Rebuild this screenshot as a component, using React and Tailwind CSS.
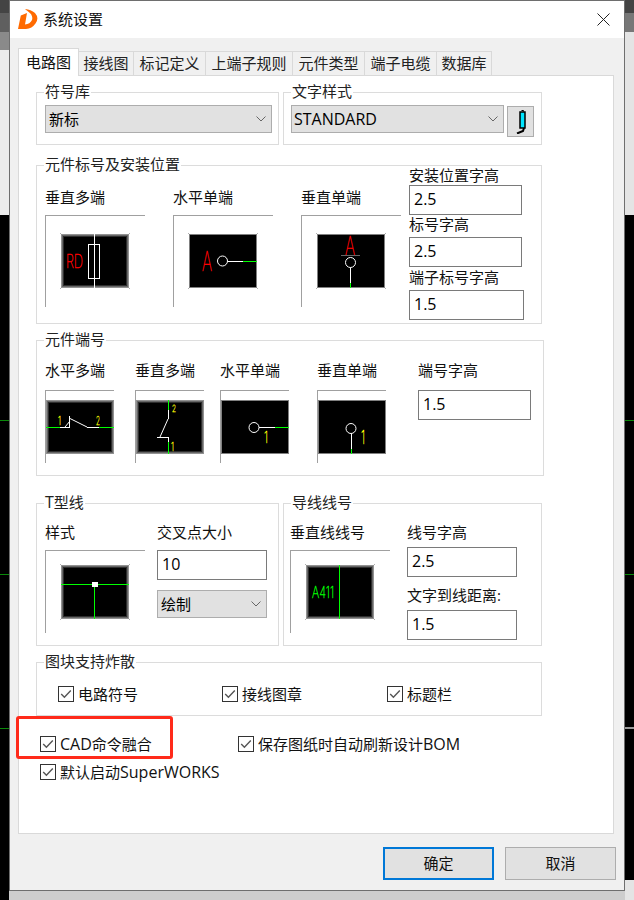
import React from "react";

const Chevron = () => (
  <svg width="10" height="6" viewBox="0 0 10 6" className="shrink-0"><polyline points="0.5,0.5 5,5 9.5,0.5" fill="none" stroke="#666" strokeWidth="1" /></svg>
);

const Select = ({ value, className }) => (
  <div className={"flex items-center justify-between bg-[#e1e1e1] border border-[#adadad] pl-[3px] pr-[5px] text-[15px] leading-none text-black " + className}>
    {value}
    <Chevron />
  </div>
);

const Field = ({ value, className = "" }) => (
  <div className={"flex items-center border border-[#7a7a7a] bg-white pl-[4px] pb-[2px] h-[30px] text-[16px] text-black " + className}>{value}</div>
);

const Label = ({ children, className = "" }) => (
  <div className={"text-[15px] leading-[18px] h-[20px] whitespace-nowrap text-[#111] " + className}>{children}</div>
);

const Group = ({ title, className = "", children }) => (
  <div className={"relative border border-[#dcdcdc] bg-white " + className}>
    <div className="absolute left-[7px] top-[-11px] bg-white px-[1px] text-[15px] leading-[18px] text-[#222] whitespace-nowrap">{title}</div>
    {children}
  </div>
);

const Handles = () => (
  <g fill="#b0b0b0">
    <rect x="-1" y="-1" width="1" height="1" />
    <rect x="68" y="-1" width="1" height="1" />
    <rect x="-1" y="54" width="1" height="1" />
    <rect x="68" y="54" width="1" height="1" />
  </g>
);

const Preview = ({ bevel, handles = true, children }) => (
  <svg width="68" height="54" viewBox="0 0 68 54" className="block overflow-visible">
    <rect x="0" y="0" width="68" height="54" fill="#000" />
    {bevel ? (
      <g fill="none">
        <rect x="0.5" y="0.5" width="67" height="53" stroke="#929292" />
        <rect x="1.5" y="1.5" width="65" height="51" stroke="#666" />
        <rect x="2.5" y="2.5" width="63" height="49" stroke="#2e2e2e" />
      </g>
    ) : (
      <rect x="0.5" y="0.5" width="67" height="53" fill="none" stroke="#808080" />
    )}
    {children}
    {handles && <Handles />}
  </svg>
);

const Frame = ({ className = "", pad = "", children }) => (
  <div className={"border-t border-l border-[#a0a0a0] bg-white " + pad + " " + className}>{children}</div>
);

const Check = ({ label, className = "" }) => (
  <div className={"flex items-center h-[16px] " + className}>
    <div className="w-[16px] h-[16px] border border-[#333] bg-white flex items-center justify-center shrink-0">
      <svg width="12" height="10" viewBox="0 0 12 10"><polyline points="1.2,5 4.4,8.2 10.8,1.4" fill="none" stroke="#555" strokeWidth="1.4" /></svg>
    </div>
    <span className="ml-[4px] text-[15px] leading-[16px] text-[#111] whitespace-nowrap">{label}</span>
  </div>
);

const Lat = ({ children, className = "" }) => <span className={"text-[16px] " + className}>{children}</span>;

const CadText = ({ x, y, w, size, fill, children }) => (
  <text x={x} y={y} fontSize={size} fontWeight="100" fill={fill} stroke={fill} strokeWidth="0.55" textLength={w} lengthAdjust="spacingAndGlyphs" fontFamily="Inter, Liberation Sans, sans-serif">{children}</text>
);

const W = "#fff", G = "#0f0", R = "#f00", Y = "#ff0";
const L = ({ x1, y1, x2, y2, c = W }) => <line x1={x1} y1={y1} x2={x2} y2={y2} stroke={c} strokeWidth="1" />;

const Tab = ({ children, className = "" }) => (
  <div className={"flex items-center justify-center h-[24px] border-t border-r border-[#d9d9d9] text-[15px] text-[#222] whitespace-nowrap " + className}>{children}</div>
);

export default function App() {
  return (
    <div className="relative flex w-[634px] h-[900px] overflow-hidden bg-[#cdcdcd] font-['Open_Sans','Noto_Sans_CJK_SC',sans-serif]">
      <div className="flex flex-col w-[9px] h-[900px] shrink-0">
        <div className="h-[13px] bg-[#444]" />
        <div className="h-[19px] bg-[#5f5f5f]" />
        <div className="h-[18px] bg-[#8a8a8a]" />
        <div className="h-[165px] bg-[#ececec]" />
        <div className="h-[205px] bg-black" />
        <div className="h-[1px] bg-[#0a8a0a]" />
        <div className="h-[153px] bg-black" />
        <div className="h-[1px] bg-[#0a8a0a]" />
        <div className="h-[153px] bg-black" />
        <div className="h-[1px] bg-[#0a8a0a]" />
        <div className="flex-1 bg-black" />
      </div>

      <div className="flex flex-col w-[616px] h-[891px] shrink-0 border-t border-l border-r border-b border-[#6e6e6e] bg-[#f0f0f0]">
        <div className="flex items-center h-[37px] bg-white shrink-0 pl-[8px] pr-[14px]">
          <svg width="20" height="21" viewBox="0 0 20 21" className="shrink-0">
            <path d="M0 20 L2.8 6.6 L9 4 L7 15.6 Q12 15 14 11 Q15.5 6 9.5 2 Q8 1 7 0 Q13 .5 17 4 Q21.5 9 17.5 14.5 Q14 19.5 8 20 Z" fill="#ff6a00" />
          </svg>
          <span className="ml-[5px] text-[15px] text-[#111]">系统设置</span>
          <svg width="13" height="13" viewBox="0 0 13 13" className="ml-auto shrink-0"><path d="M0.5 0.5 L12.5 12.5 M12.5 0.5 L0.5 12.5" stroke="#222" strokeWidth="1" fill="none" /></svg>
        </div>

        <div className="flex flex-col flex-1 pl-[8px] pt-[10px]">
          <div className="flex items-end h-[27px] relative z-10">
            <div className="flex items-center justify-center w-[61px] h-[28px] -mb-[1px] bg-white border-t border-l border-r border-[#d9d9d9] text-[15px] text-[#111]">电路图</div>
            <Tab className="w-[55px]">接线图</Tab>
            <Tab className="w-[72px]">标记定义</Tab>
            <Tab className="w-[87px]">上端子规则</Tab>
            <Tab className="w-[72px]">元件类型</Tab>
            <Tab className="w-[72px]">端子电缆</Tab>
            <Tab className="w-[55px]">数据库</Tab>
          </div>

          <div className="flex flex-col w-[596px] h-[759px] bg-white border border-[#d9d9d9] pl-[17px] pt-[16px]">
            <div className="flex gap-[4px]">
              <Group title="符号库" className="w-[243px] h-[53px] pl-[8px] pt-[12px]">
                <Select value={<span>新标</span>} className="w-[227px] h-[28px]" />
              </Group>
              <Group title="文字样式" className="flex items-start w-[259px] h-[53px] pl-[7px] pt-[12px]">
                <Select value={<Lat className="-ml-[1px]">STANDARD</Lat>} className="w-[213px] h-[28px]" />
                <div className="ml-[3px] mt-[1px] flex items-center justify-center w-[27px] h-[31px] bg-[#e1e1e1] border border-[#adadad]">
                  <svg width="12" height="24" viewBox="0 0 12 24">
                    <path d="M6.5 0.5 H8.5 V1.5" fill="none" stroke="#000" />
                    <rect x="5" y="2" width="5" height="16" fill="#00e5ff" stroke="#000" strokeWidth="1.5" />
                    <path d="M9 18 L8 21 L2 23.5" fill="none" stroke="#000" strokeWidth="2" />
                  </svg>
                </div>
              </Group>
            </div>

            <Group title="元件标号及安装位置" className="flex items-start mt-[20px] w-[506px] h-[159px] pl-[8px] pt-[22px]">
              <div className="w-[100px]">
                <Label>垂直多端</Label>
                <Frame className="mt-[7px] w-[100px] h-[92px]" pad="pl-[15px] pt-[18px]">
                  <Preview bevel>
                    <CadText x="5" y="34" w="17" size="18" fill={R}>RD</CadText>
                    <L x1="33.5" y1="0" x2="33.5" y2="54" />
                    <rect x="27.5" y="10.5" width="11" height="34" fill="none" stroke={W} />
                  </Preview>
                </Frame>
              </div>
              <div className="w-[100px] ml-[28px]">
                <Label>水平单端</Label>
                <Frame className="mt-[7px] w-[100px] h-[92px]" pad="pl-[15px] pt-[18px]">
                  <Preview>
                    <CadText x="13" y="37" w="10" size="27" fill={R}>A</CadText>
                    <circle cx="33.5" cy="27" r="5" fill="none" stroke={W} />
                    <L x1="38.5" y1="27.5" x2="54" y2="27.5" />
                    <L x1="54" y1="27.5" x2="68" y2="27.5" c={G} />
                  </Preview>
                </Frame>
              </div>
              <div className="w-[100px] ml-[28px]">
                <Label>垂直单端</Label>
                <Frame className="mt-[7px] w-[100px] h-[92px]" pad="pl-[15px] pt-[18px]">
                  <Preview>
                    <CadText x="28" y="21" w="10" size="26" fill={R}>A</CadText>
                    <L x1="24" y1="21.5" x2="43" y2="21.5" c="#666" />
                    <circle cx="33.5" cy="28.5" r="5" fill="none" stroke={W} />
                    <L x1="33.5" y1="33.5" x2="33.5" y2="49" />
                    <L x1="33.5" y1="49" x2="33.5" y2="54" c={G} />
                  </Preview>
                </Frame>
              </div>
              <div className="ml-[8px] -mt-[23px] flex flex-col items-start">
                <Label className="pt-[1px]">安装位置字高</Label>
                <Field value="2.5" className="w-[113px]" />
                <Label className="h-[22px]">标号字高</Label>
                <Field value="2.5" className="w-[113px]" />
                <Label className="h-[23px] pt-[1px]">端子标号字高</Label>
                <Field value="1.5" className="w-[115px]" />
              </div>
            </Group>

            <Group title="元件端号" className="flex items-start mt-[16px] w-[508px] h-[136px] pl-[8px] pt-[20px]">
              <div className="w-[69px]">
                <Label>水平多端</Label>
                <Frame className="mt-[9px] w-[69px] h-[73px]" pad="pt-[9px]">
                  <Preview bevel handles={false}>
                    <L x1="0" y1="27.5" x2="14" y2="27.5" c={G} />
                    <L x1="14" y1="27.5" x2="24" y2="27.5" />
                    <L x1="23.5" y1="16" x2="23.5" y2="27.5" />
                    <L x1="19" y1="27" x2="24" y2="21" />
                    <L x1="23" y1="18" x2="41" y2="27" />
                    <L x1="41" y1="27.5" x2="53" y2="27.5" />
                    <L x1="53" y1="27.5" x2="68" y2="27.5" c={G} />
                    <CadText x="12" y="25" w="3" size="12" fill={Y}>1</CadText>
                    <CadText x="50" y="25" w="4" size="12" fill={Y}>2</CadText>
                  </Preview>
                </Frame>
              </div>
              <div className="w-[69px] ml-[21px]">
                <Label>垂直多端</Label>
                <Frame className="mt-[9px] w-[69px] h-[73px]" pad="pt-[9px]">
                  <Preview bevel handles={false}>
                    <L x1="32.5" y1="0" x2="32.5" y2="10" c={G} />
                    <L x1="32.5" y1="10" x2="32.5" y2="19" />
                    <L x1="32" y1="19" x2="24" y2="37" />
                    <L x1="21" y1="37.5" x2="32" y2="37.5" />
                    <L x1="32.5" y1="37" x2="32.5" y2="42" />
                    <L x1="32.5" y1="42" x2="32.5" y2="54" c={G} />
                    <CadText x="36" y="12" w="4" size="10" fill={Y}>2</CadText>
                    <CadText x="35" y="51" w="3" size="11" fill={Y}>1</CadText>
                  </Preview>
                </Frame>
              </div>
              <div className="w-[69px] ml-[16px]">
                <Label>水平单端</Label>
                <Frame className="mt-[9px] w-[69px] h-[73px]" pad="pt-[9px]">
                  <Preview handles={false}>
                    <circle cx="33" cy="27.5" r="5" fill="none" stroke={W} />
                    <L x1="38" y1="27.5" x2="54" y2="27.5" />
                    <L x1="54" y1="27.5" x2="68" y2="27.5" c={G} />
                    <CadText x="43" y="43" w="4" size="16" fill={Y}>1</CadText>
                  </Preview>
                </Frame>
              </div>
              <div className="w-[69px] ml-[28px]">
                <Label>垂直单端</Label>
                <Frame className="mt-[9px] w-[69px] h-[73px]" pad="pt-[9px]">
                  <Preview handles={false}>
                    <circle cx="33" cy="28.5" r="5" fill="none" stroke={W} />
                    <L x1="33.5" y1="33.5" x2="33.5" y2="49" />
                    <L x1="33.5" y1="49" x2="33.5" y2="54" c={G} />
                    <CadText x="43" y="44" w="4" size="18" fill={Y}>1</CadText>
                  </Preview>
                </Frame>
              </div>
              <div className="ml-[32px]">
                <Label>端号字高</Label>
                <Field value="1.5" className="mt-[9px] w-[113px]" />
              </div>
            </Group>

            <div className="flex gap-[4px] mt-[27px]">
              <Group title={<Lat>T<span className="text-[15px]">型线</span></Lat>} className="flex items-start w-[243px] h-[143px] pl-[8px] pt-[19px]">
                <div className="w-[100px]">
                  <Label>样式</Label>
                  <Frame className="mt-[7px] w-[100px] h-[83px]" pad="pl-[15px] pt-[14px]">
                    <Preview bevel>
                      <L x1="0" y1="19.5" x2="68" y2="19.5" c={G} />
                      <L x1="33.5" y1="19" x2="33.5" y2="54" c={G} />
                      <rect x="31" y="17" width="6" height="5" fill={W} />
                    </Preview>
                  </Frame>
                </div>
                <div className="ml-[12px]">
                  <Label>交叉点大小</Label>
                  <Field value="10" className="mt-[7px] w-[110px]" />
                  <Select value={<span>绘制</span>} className="mt-[10px] w-[110px] h-[28px]" />
                </div>
              </Group>
              <Group title="导线线号" className="flex items-start w-[259px] h-[143px] pl-[6px] pt-[19px]">
                <div className="w-[100px]">
                  <Label>垂直线线号</Label>
                  <Frame className="mt-[7px] w-[100px] h-[83px]" pad="pl-[15px] pt-[14px]">
                    <Preview bevel>
                      <L x1="33.5" y1="0" x2="33.5" y2="54" c={G} />
                      <CadText x="6" y="33" w="22" size="16" fill={G}>A411</CadText>
                    </Preview>
                  </Frame>
                </div>
                <div className="ml-[17px]">
                  <Label>线号字高</Label>
                  <Field value="2.5" className="mt-[4px] w-[110px]" />
                  <Label className="mt-[9px]">文字到线距离:</Label>
                  <Field value="1.5" className="mt-[4px] w-[110px]" />
                </div>
              </Group>
            </div>

            <Group title="图块支持炸散" className="flex items-start mt-[16px] w-[506px] h-[54px] pl-[21px] pt-[23px]">
              <Check label="电路符号" className="w-[164px]" />
              <Check label="接线图章" className="w-[165px]" />
              <Check label="标题栏" />
            </Group>

            <div className="flex mt-[20px] ml-[4px]">
              <Check label={<><Lat>CAD</Lat>命令融合</>} className="w-[198px]" />
              <Check label={<>保存图纸时自动刷新设计<Lat>BOM</Lat></>} />
            </div>
            <div className="flex mt-[12px] ml-[4px]">
              <Check label={<>默认启动<Lat>SuperWORKS</Lat></>} />
            </div>
          </div>

          <div className="flex justify-end gap-[11px] pr-[8px] pt-[13px]">
            <div className="flex items-center justify-center w-[111px] h-[33px] bg-[#e1e1e1] border-2 border-[#0078d7] text-[15px] text-[#111]">确定</div>
            <div className="flex items-center justify-center w-[111px] h-[33px] bg-[#e1e1e1] border border-[#adadad] text-[15px] text-[#111]">取消</div>
          </div>
        </div>
      </div>

      <div className="flex flex-col w-[9px] h-[900px] shrink-0">
        <div className="h-[13px] bg-[#444]" />
        <div className="h-[19px] bg-[#777]" />
        <div className="h-[183px] bg-[#e4e4e4]" />
        <div className="h-[205px] bg-black" />
        <div className="h-[1px] bg-[#0a8a0a]" />
        <div className="h-[153px] bg-black" />
        <div className="h-[1px] bg-[#0a8a0a]" />
        <div className="h-[152px] bg-black" />
        <div className="h-[2px] bg-[#999]" />
        <div className="h-[151px] bg-black" />
        <div className="flex-1 bg-[#e4e4e4]" />
      </div>

      <div className="absolute left-[16px] top-[716px] w-[157px] h-[43px] border-[3px] border-[#ff2a1a] rounded-[3px]" />
    </div>
  );
}
